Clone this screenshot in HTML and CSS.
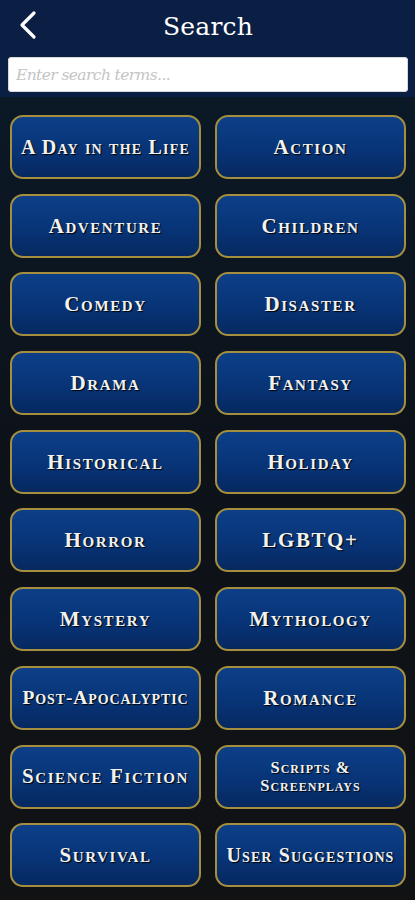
FILE: index.html
```html
<!DOCTYPE html>
<html>
<head>
<meta charset="utf-8">
<link rel="stylesheet" href="styles.css">
</head>
<body>
<header class="top">
  <div class="bar">
    <svg class="back" width="20" height="30" viewBox="0 0 20 30"><path d="M16 3 L4 15 L16 27" fill="none" stroke="#fff" stroke-width="3.2" stroke-linecap="round" stroke-linejoin="round"/></svg>
    <h1 class="title">Search</h1>
  </div>
  <div class="search"><span class="ph">Enter search terms...</span></div>
</header>
<main class="grid">
  <button class="cat tight">A Day in the Life</button>
  <button class="cat">Action</button>
  <button class="cat">Adventure</button>
  <button class="cat">Children</button>
  <button class="cat">Comedy</button>
  <button class="cat">Disaster</button>
  <button class="cat">Drama</button>
  <button class="cat">Fantasy</button>
  <button class="cat">Historical</button>
  <button class="cat">Holiday</button>
  <button class="cat">Horror</button>
  <button class="cat">LGBTQ+</button>
  <button class="cat">Mystery</button>
  <button class="cat">Mythology</button>
  <button class="cat small">Post-Apocalyptic</button>
  <button class="cat">Romance</button>
  <button class="cat">Science Fiction</button>
  <button class="cat two">Scripts &amp;<br>Screenplays</button>
  <button class="cat">Survival</button>
  <button class="cat small wide">User Suggestions</button>
</main>
</body>
</html>
```
FILE: styles.css
```css
html, body {
  margin: 0;
  padding: 0;
}
body {
  width: 415px;
  height: 900px;
  overflow: hidden;
  background: linear-gradient(180deg, #0a1a2a 0%, #0d1219 50%, #111214 100%);
  font-family: "Liberation Serif", "DejaVu Serif", serif;
}
.top {
  background: #0b1f44;
  padding: 0 7px 5px 8px;
  height: 92px;
}
.bar {
  height: 52px;
  margin-bottom: 5px;
  display: flex;
  align-items: center;
  justify-content: center;
  position: relative;
}
.back {
  position: absolute;
  left: 10px;
  top: 10px;
}
.title {
  margin: 0;
  color: #fff;
  font-family: "DejaVu Serif", serif;
  font-weight: normal;
  font-size: 25px;
  letter-spacing: 0.2px;
}
.search {
  height: 35px;
  background: #fff;
  border-radius: 4px;
  display: flex;
  align-items: center;
  padding-left: 8px;
  box-shadow: inset 0 0 0 1px #d8d8d8;
}
.ph {
  color: #c4c4c4;
  font-style: italic;
  font-size: 15.5px;
  font-family: "DejaVu Serif", serif;
  letter-spacing: -0.6px;
}
.grid {
  display: grid;
  grid-template-columns: 191px 191px;
  grid-auto-rows: 64px;
  column-gap: 14px;
  row-gap: 14.7px;
  padding: 18px 9px 0 10px;
}
.cat {
  margin: 0;
  border: 2px solid #a58f3f;
  border-radius: 13px;
  background: linear-gradient(180deg, #0c3f88 0%, #083477 55%, #06285f 100%);
  color: #f2f2f2;
  font-family: "Liberation Serif", serif;
  font-weight: bold;
  font-variant: small-caps;
  font-size: 21px;
  letter-spacing: 1.6px;
  text-shadow: 1px 1px 1px #000;
  padding: 0;
  display: flex;
  align-items: center;
  justify-content: center;
  text-align: center;
  line-height: 1.05;
}
.cat.tight {
  font-size: 20px;
  letter-spacing: 1.2px;
}
.cat.small {
  font-size: 19.5px;
  letter-spacing: 0.9px;
}
.cat.wide {
  font-size: 20px;
  letter-spacing: 1.1px;
}
.cat.two {
  font-size: 16.5px;
  letter-spacing: 1px;
}
```
